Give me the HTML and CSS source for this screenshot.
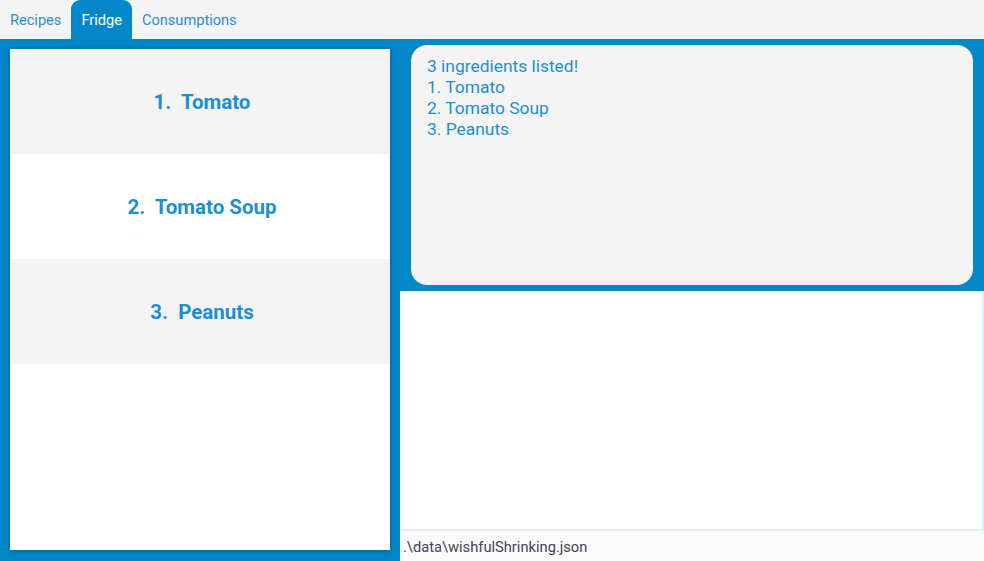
FILE: index.html
```html
<!DOCTYPE html>
<html>
<head>
<meta charset="utf-8">
<link rel="stylesheet" href="styles.css">
</head>
<body>
<div class="tabs">
  <div class="tab">Recipes</div>
  <div class="tab active">Fridge</div>
  <div class="tab">Consumptions</div>
</div>
<div class="main">
  <div class="left">
    <div class="list">
      <div class="item alt">1.&nbsp; Tomato</div>
      <div class="item">2.&nbsp; Tomato Soup</div>
      <div class="item alt">3.&nbsp; Peanuts</div>
    </div>
  </div>
  <div class="right">
    <div class="result-wrap">
      <div class="result">
        <div>3 ingredients listed!</div>
        <div>1. Tomato</div>
        <div>2. Tomato Soup</div>
        <div>3. Peanuts</div>
      </div>
    </div>
    <div class="blank"></div>
    <div class="status">.\data\wishfulShrinking.json</div>
  </div>
</div>
</body>
</html>
```
FILE: styles.css
```css
html, body { margin: 0; padding: 0; }
body {
  width: 984px;
  height: 561px;
  overflow: hidden;
  font-family: Roboto, "Liberation Sans", sans-serif;
  background: #0288c8;
  display: flex;
  flex-direction: column;
}
.tabs {
  height: 39px;
  background: #f4f4f4;
  display: flex;
  align-items: flex-end;
}
.tab {
  height: 39px;
  box-sizing: border-box;
  padding: 0 10px;
  line-height: 41px;
  font-size: 14.6px;
  color: #2590cd;
}
.tab.active {
  background: #0288c8;
  color: #ffffff;
  border-radius: 9px 9px 0 0;
}
.main {
  flex: 1;
  display: flex;
  min-height: 0;
}
.left {
  width: 380px;
  padding: 10px 0 11px 10px;
}
.list {
  height: 100%;
  background: #ffffff;
  box-shadow: 0 1px 6px rgba(0, 40, 80, 0.45);
}
.item {
  height: 105px;
  display: flex;
  align-items: center;
  justify-content: center;
  padding-left: 4px;
  font-weight: bold;
  font-size: 20.5px;
  color: #1d8fcf;
  background: #ffffff;
}
.item.alt { background: #f4f4f4; }
.right {
  flex: 1;
  display: flex;
  flex-direction: column;
  padding-left: 10px;
}
.result-wrap {
  height: 252px;
  box-sizing: border-box;
  padding: 6px 11px 6px 11px;
}
.result {
  height: 100%;
  box-sizing: border-box;
  background: #f4f4f4;
  border-radius: 16px;
  padding: 11px 16px;
  font-size: 17.4px;
  line-height: 21px;
  color: #1d8fcf;
}
.blank {
  flex: 1;
  background: #ffffff;
  border-right: 2px solid #dcf0fa;
  border-bottom: 2px solid #dcf0fa;
  border-top: 1px solid #e4f2fa;
}
.status {
  height: 30px;
  background: #fafafa;
  font-size: 14.7px;
  line-height: 32px;
  padding-left: 3px;
  color: #444455;
}
```
